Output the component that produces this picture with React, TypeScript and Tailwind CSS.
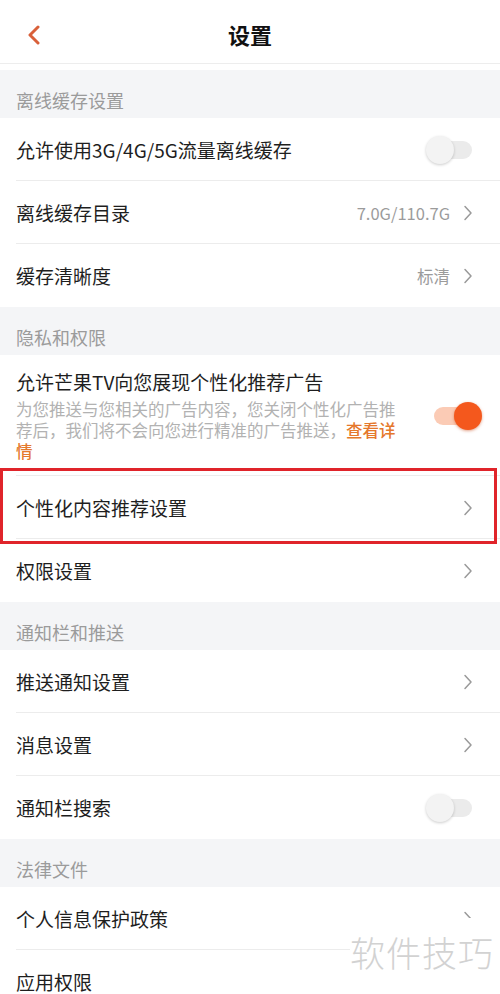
import React from 'react';

const font = { fontFamily: '"Noto Sans CJK SC", "Noto Sans", sans-serif' };

function Chevron() {
  return (
    <svg width="10" height="16" viewBox="0 0 10 16" className="shrink-0">
      <path d="M2 1.5 L8 8 L2 14.5" fill="none" stroke="#9a9a9a" strokeWidth="1.5" strokeLinecap="round" strokeLinejoin="round" />
    </svg>
  );
}

function Toggle({ on }: { on?: boolean }) {
  return (
    <div className="relative h-[28px] w-[56px] shrink-0">
      <div
        className={`absolute left-[8px] top-[5px] h-[18px] w-[38px] rounded-full ${
          on ? 'bg-[#fbcbb5]' : 'bg-[#ebebeb]'
        }`}
      />
      <div
        className={`absolute top-0 h-[28px] w-[28px] rounded-full ${
          on
            ? 'right-0 bg-[#f4581d] shadow-[0_1px_3px_rgba(200,70,20,0.5)]'
            : 'left-0 bg-[#f3f3f3] shadow-[0_1px_3px_rgba(0,0,0,0.2)]'
        }`}
      />
    </div>
  );
}

function SectionHeader({ title }: { title: string }) {
  return (
    <div className="flex h-[48px] items-end bg-[#f4f5f7] px-4 pb-[6px]">
      <span className="text-[18px] leading-[24px] text-[#9b9b9b]">{title}</span>
    </div>
  );
}

function Row({
  label,
  value,
  toggle,
  chevron = true,
  divider = true,
}: {
  label: string;
  value?: string;
  toggle?: 'on' | 'off';
  chevron?: boolean;
  divider?: boolean;
}) {
  return (
    <div className="bg-white">
      <div className="flex h-[62px] items-center pl-4 pr-[27px] pt-[2px]">
        <span className="flex-1 text-[19px] text-[#1e1e1e]">{label}</span>
        {value && <span className="mr-[13px] text-[16.5px] text-[#9b9b9b]">{value}</span>}
        {toggle ? (
          <div className="-mr-[9px]">
            <Toggle on={toggle === 'on'} />
          </div>
        ) : (
          chevron && <Chevron />
        )}
      </div>
      <div className={`ml-4 h-px ${divider ? 'bg-[#ececec]' : 'bg-white'}`} />
    </div>
  );
}

export default function App() {
  return (
    <div className="relative h-[994px] w-[500px] overflow-hidden bg-white" style={font}>
      {/* top bar */}
      <div className="pb-[6px]">
        <div className="relative flex h-[64px] items-center justify-center border-b border-[#ededed]">
          <svg width="14" height="20" viewBox="0 0 14 20" className="absolute left-[27px] top-[25px]">
            <path d="M11 2 L3 10 L11 18" fill="none" stroke="#d9603a" strokeWidth="3" strokeLinecap="round" strokeLinejoin="round" />
          </svg>
          <span className="mt-[6px] text-[22px] font-bold text-[#111]">设置</span>
        </div>
      </div>

      <SectionHeader title="离线缓存设置" />
      <Row label="允许使用3G/4G/5G流量离线缓存" toggle="off" />
      <Row label="离线缓存目录" value="7.0G/110.7G" />
      <Row label="缓存清晰度" value="标清" divider={false} />

      <SectionHeader title="隐私和权限" />
      <div className="bg-white">
        <div className="flex items-center pb-[13px] pl-4 pr-[18px] pt-[14px]">
          <div className="w-[390px]">
            <div className="text-[19px] leading-[26px] text-[#1e1e1e]">允许芒果TV向您展现个性化推荐广告</div>
            <div className="mt-[4px] text-[16.5px] leading-[21px] text-[#b2b2b2]">
              为您推送与您相关的广告内容，您关闭个性化广告推荐后，我们将不会向您进行精准的广告推送，
              <span className="font-medium text-[#e5782c]">查看详情</span>
            </div>
          </div>
          <div className="ml-auto">
            <Toggle on />
          </div>
        </div>
        <div className="ml-4 h-px bg-[#ececec]" />
      </div>
      <div className="relative">
        <Row label="个性化内容推荐设置" />
        <div className="pointer-events-none absolute -top-[8px] bottom-[-5px] left-0 right-[3px] border-[3px] border-[#e0242a]" />
      </div>
      <Row label="权限设置" divider={false} />

      <SectionHeader title="通知栏和推送" />
      <Row label="推送通知设置" />
      <Row label="消息设置" />
      <Row label="通知栏搜索" toggle="off" divider={false} />

      <SectionHeader title="法律文件" />
      <Row label="个人信息保护政策" />
      <Row label="应用权限" divider={false} />

      {/* watermark */}
      <div className="absolute right-0 top-[918px] flex h-[76px] w-[150px] items-start justify-end bg-white pr-[6px] pt-[14px]">
        <span className="text-[35px] font-light leading-[40px] tracking-[1px] text-[#d2d2d2]">软件技巧</span>
      </div>
    </div>
  );
}
